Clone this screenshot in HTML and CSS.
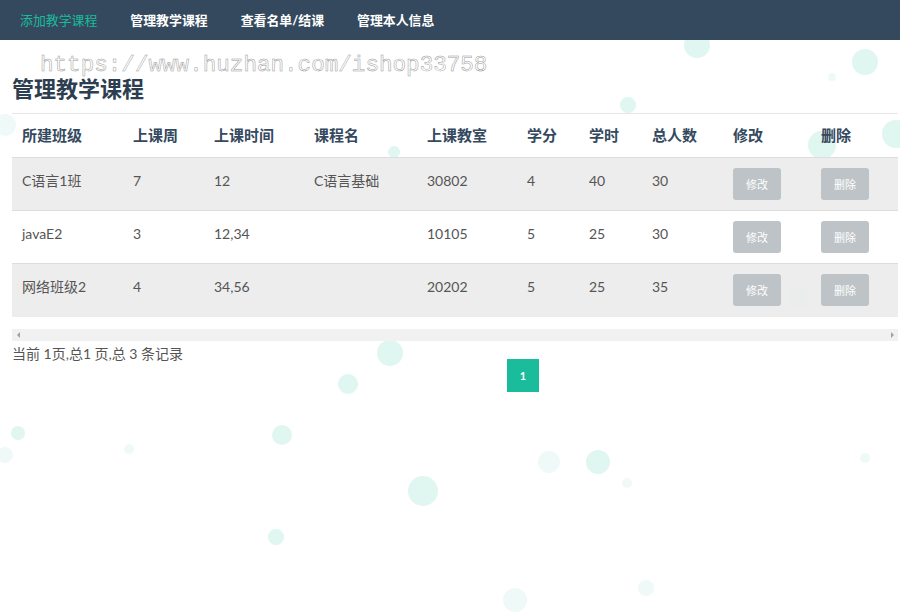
FILE: index.html
```html
<!DOCTYPE html>
<html lang="zh-CN">
<head>
<meta charset="utf-8">
<title>管理教学课程</title>
<link rel="stylesheet" href="styles.css">
</head>
<body>
<div class="bubbles" aria-hidden="true">
  <span class="b" style="left:684px;top:32px;width:26px;height:26px"></span>
  <span class="b" style="left:852px;top:49px;width:26px;height:26px"></span>
  <span class="b f" style="left:828px;top:73px;width:8px;height:8px"></span>
  <span class="b" style="left:620px;top:97px;width:16px;height:16px"></span>
  <span class="b" style="left:808px;top:131px;width:28px;height:28px"></span>
  <span class="b" style="left:882px;top:120px;width:28px;height:28px"></span>
  <span class="b" style="left:388px;top:146px;width:12px;height:12px"></span>
  <span class="b f" style="left:-6px;top:114px;width:22px;height:22px"></span>
  <span class="b" style="left:377px;top:340px;width:26px;height:26px"></span>
  <span class="b" style="left:338px;top:374px;width:20px;height:20px"></span>
  <span class="b" style="left:787px;top:286px;width:22px;height:22px"></span>
  <span class="b" style="left:11px;top:426px;width:14px;height:14px"></span>
  <span class="b" style="left:272px;top:425px;width:20px;height:20px"></span>
  <span class="b" style="left:408px;top:476px;width:30px;height:30px"></span>
  <span class="b f" style="left:538px;top:451px;width:22px;height:22px"></span>
  <span class="b" style="left:586px;top:450px;width:24px;height:24px"></span>
  <span class="b" style="left:268px;top:529px;width:16px;height:16px"></span>
  <span class="b f" style="left:503px;top:588px;width:24px;height:24px"></span>
  <span class="b f" style="left:860px;top:453px;width:10px;height:10px"></span>
  <span class="b f" style="left:638px;top:580px;width:16px;height:16px"></span>
  <span class="b f" style="left:622px;top:478px;width:10px;height:10px"></span>
  <span class="b f" style="left:-3px;top:447px;width:16px;height:16px"></span>
  <span class="b f" style="left:124px;top:444px;width:10px;height:10px"></span>
</div>

<nav class="navbar">
  <a class="nav-item active" href="#">添加教学课程</a>
  <a class="nav-item" href="#">管理教学课程</a>
  <a class="nav-item" href="#">查看名单/结课</a>
  <a class="nav-item" href="#">管理本人信息</a>
</nav>

<div class="watermark">https://www.huzhan.com/ishop33758</div>

<main class="content">
  <h1 class="title">管理教学课程</h1>
  <div class="table-wrap">
    <table class="grid">
      <thead>
        <tr>
          <th class="c1">所建班级</th>
          <th class="c2">上课周</th>
          <th class="c3">上课时间</th>
          <th class="c4">课程名</th>
          <th class="c5">上课教室</th>
          <th class="c6">学分</th>
          <th class="c7">学时</th>
          <th class="c8">总人数</th>
          <th class="c9">修改</th>
          <th class="c10">删除</th>
        </tr>
      </thead>
      <tbody>
        <tr class="odd">
          <td>C语言1班</td><td>7</td><td>12</td><td>C语言基础</td><td>30802</td><td>4</td><td>40</td><td>30</td>
          <td><button class="btn">修改</button></td><td><button class="btn">删除</button></td>
        </tr>
        <tr>
          <td>javaE2</td><td>3</td><td>12,34</td><td></td><td>10105</td><td>5</td><td>25</td><td>30</td>
          <td><button class="btn">修改</button></td><td><button class="btn">删除</button></td>
        </tr>
        <tr class="odd">
          <td>网络班级2</td><td>4</td><td>34,56</td><td></td><td>20202</td><td>5</td><td>25</td><td>35</td>
          <td><button class="btn">修改</button></td><td><button class="btn">删除</button></td>
        </tr>
      </tbody>
    </table>
    <div class="hscroll"><span class="arrow left"></span><span class="arrow right"></span></div>
  </div>
  <p class="summary">当前 1页,总1 页,总 3 条记录</p>
  <div class="pager"><a class="page active" href="#">1</a></div>
</main>
</body>
</html>
```

FILE: styles.css
```css
* { box-sizing: border-box; }
html, body { margin: 0; padding: 0; }
body {
  width: 900px;
  height: 615px;
  overflow: hidden;
  background: #ffffff;
  font-family: Lato, "Noto Sans CJK SC", sans-serif;
  color: #555;
  position: relative;
}

.bubbles {
  position: absolute;
  inset: 0;
  z-index: 0;
  pointer-events: none;
}
.b {
  position: absolute;
  border-radius: 50%;
  background: rgba(26, 188, 156, 0.14);
}
.b.f { background: rgba(26, 188, 156, 0.07); }

.navbar {
  position: relative;
  z-index: 2;
  height: 40px;
  background: #34495e;
  display: flex;
  align-items: center;
  gap: 33px;
  padding: 0 0 1px 20px;
}
.nav-item {
  color: #ffffff;
  text-decoration: none;
  font-size: 12.9px;
  font-weight: 700;
  line-height: 18px;
}
.nav-item.active { color: #1abc9c; font-weight: 400; }

.watermark {
  position: absolute;
  z-index: 3;
  left: 40px;
  top: 50px;
  font-family: "Liberation Mono", monospace;
  font-size: 22.6px;
  line-height: 30px;
  color: #ffffff;
  -webkit-text-stroke: 0.5px #9a9a9a;
  pointer-events: none;
}

.content {
  position: relative;
  z-index: 1;
  padding: 0 2px 0 12px;
}
.title {
  margin: 35px 0 10px;
  font-size: 22px;
  line-height: 28px;
  font-weight: 700;
  color: #2c3e50;
}

.table-wrap { width: 886px; }
.grid {
  width: 886px;
  border-collapse: collapse;
  table-layout: fixed;
  border-top: 1px solid #e6e6e6;
}
.grid th {
  text-align: left;
  font-size: 15px;
  font-weight: 700;
  color: #34495e;
  padding: 9px 10px 10px;
  line-height: 24px;
}
.grid td {
  font-size: 14px;
  color: #555;
  padding: 11px 10px 9px;
  line-height: 24px;
  vertical-align: top;
  height: 53px;
  border-top: 1px solid #dddddd;
}
.grid tbody tr { background: rgba(255, 255, 255, 0.55); }
.grid tbody tr.odd { background: rgba(236, 236, 236, 0.92); }

.c1 { width: 111px; }
.c2 { width: 81px; }
.c3 { width: 100px; }
.c4 { width: 113px; }
.c5 { width: 100px; }
.c6 { width: 62px; }
.c7 { width: 63px; }
.c8 { width: 81px; }
.c9 { width: 88px; }
.c10 { width: 87px; }

.btn {
  display: block;
  width: 48px;
  height: 32px;
  border: 0;
  border-radius: 3px;
  background: #bdc3c7;
  color: #ffffff;
  font-family: Lato, "Noto Sans CJK SC", sans-serif;
  font-size: 11px;
  padding: 0;
  margin-top: -1px;
}

.hscroll {
  position: relative;
  margin-top: 12px;
  height: 12px;
  background: #f1f1f1;
}
.arrow {
  position: absolute;
  top: 3px;
  width: 0;
  height: 0;
  border-top: 3px solid transparent;
  border-bottom: 3px solid transparent;
}
.arrow.left { left: 5px; border-right: 3px solid #a3a3a3; }
.arrow.right { right: 4px; border-left: 3px solid #a3a3a3; }

.summary {
  margin: 3px 0 0;
  font-size: 14px;
  line-height: 20px;
  color: #555;
}
.pager {
  display: flex;
  padding-left: 495px;
  margin-top: -5px;
}
.page {
  width: 32px;
  height: 33px;
  display: flex;
  align-items: center;
  justify-content: center;
  background: #1abc9c;
  color: #ffffff;
  font-size: 11px;
  font-weight: 700;
  text-decoration: none;
}
```
